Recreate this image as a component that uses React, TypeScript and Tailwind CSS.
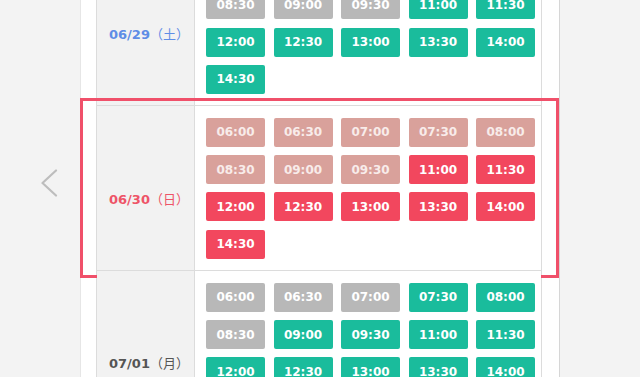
import React from "react";

type Status = "off" | "open" | "pick" | "hot";

type Day = {
  date: string;
  week: string;
  tone: "blue" | "red" | "gray";
  slots: [string, Status][];
};

const times = [
  "06:00", "06:30", "07:00", "07:30", "08:00",
  "08:30", "09:00", "09:30", "11:00", "11:30",
  "12:00", "12:30", "13:00", "13:30", "14:00",
  "14:30",
];

const build = (codes: string): [string, Status][] =>
  times.map((t, i) => {
    const c = codes[i];
    const s: Status = c === "g" ? "open" : c === "p" ? "pick" : c === "r" ? "hot" : "off";
    return [t, s];
  });

const days: Day[] = [
  { date: "06/29", week: "（土）", tone: "blue", slots: build("xxxxxxxxggggggggg") },
  { date: "06/30", week: "（日）", tone: "red", slots: build("pppppppprrrrrrrr") },
  { date: "07/01", week: "（月）", tone: "gray", slots: build("xxxggxgggggggggg") },
];

const slotClass: Record<Status, string> = {
  off: "bg-[#b8b8b8] text-white",
  open: "bg-[#1abc9c] text-white",
  pick: "bg-[#d9a19b] text-[#f8ecea]",
  hot: "bg-[#f2475e] text-white",
};

const toneClass = {
  blue: "text-[#5e8de6]",
  red: "text-[#ee5468]",
  gray: "text-[#555555]",
};

const DayRow = ({ day, active }: { day: Day; active?: boolean }) => {
  return (
    <div className="relative flex border-t border-[#dcdcdc]">
      <div className="flex w-[98px] shrink-0 items-center justify-center border-r border-[#dcdcdc] bg-[#f2f2f2] pl-[7px] pt-[22px]">
        <span className={`whitespace-nowrap text-[13px] ${toneClass[day.tone]}`}>
          <span className="font-bold [font-family:'DejaVu_Sans',sans-serif]">{day.date}</span>
          <span className="[font-family:'Noto_Sans_CJK_JP',sans-serif]">{day.week}</span>
        </span>
      </div>
      <div className="grid flex-1 grid-cols-[repeat(5,59px)] gap-x-[8.5px] gap-y-[8.3px] bg-white pb-[11px] pl-[11px] pt-[12px]">
        {day.slots.map(([t, s]) => (
          <div
            key={t}
            className={`flex h-[29px] items-center justify-center rounded-[2px] text-[12px] font-bold [font-family:'DejaVu_Sans',sans-serif] ${slotClass[s]}`}
          >
            {t}
          </div>
        ))}
      </div>
      {active && (
        <div className="pointer-events-none absolute -bottom-[8px] -left-[17px] -right-[18px] -top-[8px] border-[3px] border-[#f0506a]" />
      )}
    </div>
  );
};

export default function App() {
  return (
    <div className="flex h-[377px] w-[640px] overflow-hidden bg-[#f3f3f3]">
      <div className="w-[80px] shrink-0 pl-[40px] pt-[169px]">
        <svg width="18" height="28" viewBox="0 0 18 28" fill="none">
          <polyline
            points="16,1.5 2.5,14 16,26.5"
            stroke="#bdbdbd"
            strokeWidth="2.2"
            strokeLinecap="round"
            strokeLinejoin="round"
          />
        </svg>
      </div>
      <div className="-mt-[60px] w-[480px] shrink-0 border-l border-r border-l-[#e6e6e6] border-r-[#d6d6d6] bg-white pl-[15px]">
        <div className="w-[446px] border-x border-[#dcdcdc]">
          {days.map((d) => (
            <DayRow key={d.date} day={d} active={d.tone === "red"} />
          ))}
        </div>
      </div>
    </div>
  );
}
